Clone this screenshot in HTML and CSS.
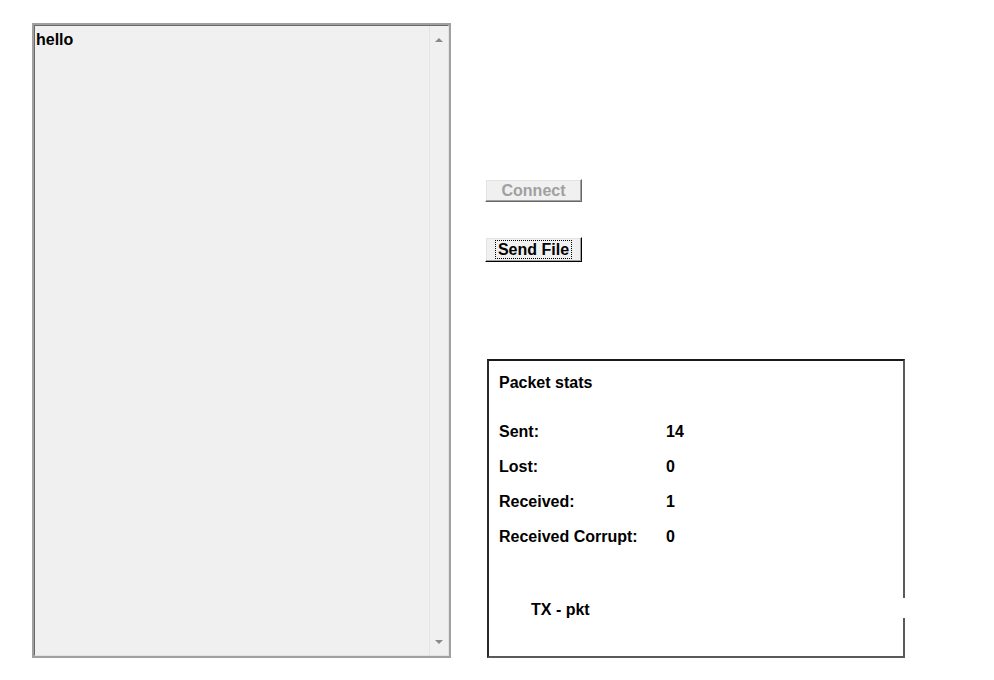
FILE: index.html
```html
<!DOCTYPE html>
<html>
<head>
<meta charset="utf-8">
<link rel="stylesheet" href="styles.css">
</head>
<body>
<div class="app">
  <div class="editor">
    <div class="editor-inner">
      <div class="editor-text">hello</div>
      <div class="scrollbar">
        <span class="arrow arrow-up"></span>
        <span class="arrow arrow-down"></span>
      </div>
    </div>
  </div>
  <div class="side">
    <button class="btn btn-connect" disabled>Connect</button>
    <button class="btn btn-send"><span class="focus">Send File</span></button>
    <div class="panel">
      <div class="panel-title">Packet stats</div>
      <div class="stats">
        <div class="label">Sent:</div><div class="value">14</div>
        <div class="label">Lost:</div><div class="value">0</div>
        <div class="label">Received:</div><div class="value">1</div>
        <div class="label">Received Corrupt:</div><div class="value">0</div>
      </div>
      <div class="tx">TX - pkt</div>
      <span class="gap"></span>
    </div>
  </div>
</div>
</body>
</html>
```
FILE: styles.css
```css
html, body {
  margin: 0;
  padding: 0;
  background: #ffffff;
}
body {
  font-family: "Liberation Sans", Arial, sans-serif;
  font-weight: bold;
  font-size: 16px;
  line-height: 18px;
  color: #000;
  -webkit-font-smoothing: none;
}
.app {
  display: flex;
  align-items: flex-start;
  padding: 23px 0 0 32px;
}
.editor {
  width: 419px;
  height: 635px;
  box-sizing: border-box;
  border: 2px solid #a0a0a0;
}
.editor-inner {
  display: flex;
  height: 100%;
  box-sizing: border-box;
  border-style: solid;
  border-width: 1px;
  border-color: #696969 #e3e3e3 #e3e3e3 #696969;
  background: #f0f0f0;
}
.editor-text {
  flex: 1;
  padding: 5px 1px;
}
.scrollbar {
  width: 19px;
  border-left: 1px solid #e4e4e4;
  background: #f0f0f0;
  display: flex;
  flex-direction: column;
  justify-content: space-between;
  align-items: center;
  padding: 12px 0 11px;
  box-sizing: border-box;
}
.arrow {
  width: 0;
  height: 0;
  border-left: 4px solid transparent;
  border-right: 4px solid transparent;
}
.arrow-up {
  border-bottom: 4px solid #8a8a8a;
}
.arrow-down {
  border-top: 4px solid #8a8a8a;
}
.side {
  display: flex;
  flex-direction: column;
  align-items: flex-start;
  margin-left: 34px;
}
.btn {
  width: 97px;
  height: 23px;
  box-sizing: border-box;
  padding: 0;
  font: inherit;
  background: #f0f0f0;
  border: 1px solid;
  border-color: #ffffff #696969 #696969 #ffffff;
  box-shadow: inset -1px -1px #a0a0a0, inset 1px 1px #e3e3e3;
  display: flex;
  align-items: center;
  justify-content: center;
}
.btn-connect {
  margin-top: 156px;
  color: #a0a0a0;
}
.btn-send {
  margin-top: 35px;
  height: 25px;
  color: #000;
  border-color: #ffffff #000 #000 #ffffff;
}
.focus {
  outline: 1px dotted #000;
  outline-offset: 0;
  padding: 0 2px;
  line-height: 17px;
}
.panel {
  position: relative;
  margin-top: 97px;
  margin-left: 2px;
  width: 418px;
  height: 299px;
  box-sizing: border-box;
  border-style: solid;
  border-width: 2px;
  border-color: #1a1a1a #5a5a5a #5a5a5a #2a2a2a;
  padding: 13px 0 0 10px;
}
.panel-title {
  height: 18px;
  margin-bottom: 31px;
}
.stats {
  display: grid;
  grid-template-columns: 167px auto;
  grid-auto-rows: 35px;
}
.tx {
  margin-top: 38px;
  padding-left: 32px;
}
.gap {
  position: absolute;
  right: -2px;
  top: 237px;
  width: 2px;
  height: 20px;
  background: #ffffff;
}
```
